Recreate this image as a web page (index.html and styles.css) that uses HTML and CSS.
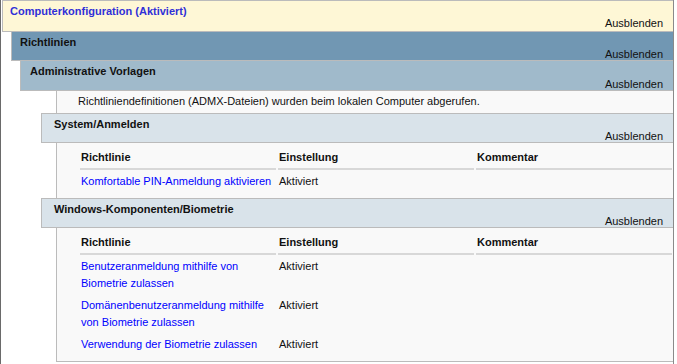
FILE: index.html
```html
<!doctype html>
<html lang="de">
  <head>
    <meta charset="UTF-8" />
    <title>Gruppenrichtlinienergebnisse</title>
    <link rel="stylesheet" href="styles.css">
  </head>
  <body>
    <div class="report">
      <div class="bar bar-root">
        <span class="bar-title">Computerkonfiguration (Aktiviert)</span>
        <span class="bar-toggle">Ausblenden</span>
      </div>

      <div class="section section-policies">
        <div class="bar bar-policies">
          <span class="bar-title">Richtlinien</span>
          <span class="bar-toggle">Ausblenden</span>
        </div>

        <div class="section section-templates">
          <div class="bar bar-templates">
            <span class="bar-title">Administrative Vorlagen</span>
            <span class="bar-toggle">Ausblenden</span>
          </div>

          <div class="info">Richtliniendefinitionen (ADMX-Dateien) wurden beim lokalen Computer abgerufen.</div>

          <div class="category">
            <div class="bar bar-category">
              <span class="bar-title">System/Anmelden</span>
              <span class="bar-toggle">Ausblenden</span>
            </div>
            <div class="panel">
              <table class="policy-table">
                <thead>
                  <tr>
                    <th>Richtlinie</th>
                    <th>Einstellung</th>
                    <th>Kommentar</th>
                  </tr>
                </thead>
                <tbody>
                  <tr>
                    <td><a href="#" class="policy-link">Komfortable PIN-Anmeldung aktivieren</a></td>
                    <td>Aktiviert</td>
                    <td></td>
                  </tr>
                </tbody>
              </table>
            </div>
          </div>

          <div class="category">
            <div class="bar bar-category">
              <span class="bar-title">Windows-Komponenten/Biometrie</span>
              <span class="bar-toggle">Ausblenden</span>
            </div>
            <div class="panel panel-last">
              <table class="policy-table">
                <thead>
                  <tr>
                    <th>Richtlinie</th>
                    <th>Einstellung</th>
                    <th>Kommentar</th>
                  </tr>
                </thead>
                <tbody>
                  <tr>
                    <td><a href="#" class="policy-link">Benutzeranmeldung mithilfe von Biometrie zulassen</a></td>
                    <td>Aktiviert</td>
                    <td></td>
                  </tr>
                  <tr>
                    <td><a href="#" class="policy-link">Domänenbenutzeranmeldung mithilfe von Biometrie zulassen</a></td>
                    <td>Aktiviert</td>
                    <td></td>
                  </tr>
                  <tr>
                    <td><a href="#" class="policy-link">Verwendung der Biometrie zulassen</a></td>
                    <td>Aktiviert</td>
                    <td></td>
                  </tr>
                </tbody>
              </table>
            </div>
          </div>
        </div>
      </div>
    </div>
  </body>
</html>
```

FILE: styles.css
```css
:root {
  --root-bg: #fef7d6;
  --policies-bg: #7197b3;
  --templates-bg: #a0bacb;
  --category-bg: #d9e3ea;
  --panel-bg: #f9f9f9;
  --line: #bbbbbb;
  --link: #0000ff;
  --text: #111;
}

* {
  margin: 0;
  padding: 0;
  box-sizing: border-box;
}

body {
  font-family: "Liberation Sans", Arial, sans-serif;
  font-size: 11px;
  color: var(--text);
  background: #fff;
}

.report {
  width: 674px;
  height: 364px;
  overflow: hidden;
  border-left: 1px solid #6a6a6a;
  border-right: 1px solid #8a8a8a;
  padding-left: 1px;
}

/* collapsible header bars */
.bar {
  display: flex;
  justify-content: space-between;
  border-left: 1px solid var(--line);
  border-bottom: 1px solid var(--line);
  padding-right: 10px;
}

.bar-title {
  align-self: flex-start;
  font-weight: bold;
  line-height: 13px;
  padding-top: 4px;
}

.bar-toggle {
  align-self: flex-end;
  line-height: 11px;
  font-weight: normal;
  color: #111;
}

.bar-root {
  background: var(--root-bg);
  border-top: 1px solid var(--line);
  height: 32px;
  padding-left: 7px;
}

.bar-root .bar-title {
  color: #3030d8;
  padding-top: 2px;
  line-height: 17px;
}

.bar-root .bar-toggle {
  padding-bottom: 2px;
}

.bar-policies {
  background: var(--policies-bg);
  height: 29px;
  padding-left: 8px;
}

.bar-templates {
  background: var(--templates-bg);
  height: 30px;
  padding-left: 9px;
}

.bar-category {
  background: var(--category-bg);
  border-top: 1px solid var(--line);
  height: 30px;
  padding-left: 12px;
}

.section-policies {
  margin-left: 9px;
}

.section-templates {
  margin-left: 9px;
}

.info {
  margin-left: 36px;
  background: var(--panel-bg);
  border-left: 1px solid var(--line);
  line-height: 17px;
  padding: 2px 0 3px 21px;
}

.category {
  margin-left: 21px;
}

.panel {
  margin-left: 15px;
  background: var(--panel-bg);
  border-left: 1px solid var(--line);
  padding: 0 0 6px 21px;
}

.panel-last {
  border-bottom: 1px solid var(--line);
}

.policy-table {
  table-layout: fixed;
  width: 594px;
  border-collapse: separate;
  border-spacing: 2px 0;
}

.policy-table th,
.policy-table td {
  width: 196px;
  text-align: left;
  vertical-align: top;
  line-height: 17px;
  padding-left: 1px;
}

.policy-table th {
  font-weight: bold;
  padding-top: 6px;
  padding-bottom: 2px;
  border-bottom: 2px solid #d8d8d8;
}

.policy-table td {
  padding-top: 3px;
  padding-bottom: 2px;
}

.policy-link {
  color: var(--link);
  text-decoration: none;
}
```
